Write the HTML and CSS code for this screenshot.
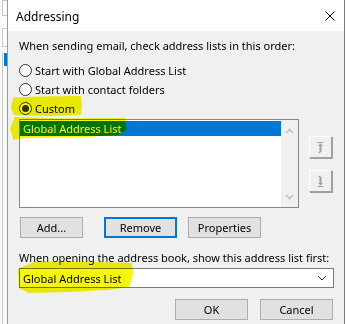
FILE: index.html
```html
<!DOCTYPE html>
<html lang="en">
<head>
  <meta charset="UTF-8">
  <title>Addressing</title>
  <link rel="stylesheet" href="styles.css">
</head>
<body>
  <div class="screen">
    <div class="backdrop">
      <span class="bd-box"></span>
      <span class="bd-box second"></span>
      <span class="bd-rail"><span class="bd-tab"></span></span>
    </div>

    <div class="dialog">
      <div class="titlebar">
        <span class="title">Addressing</span>
        <svg class="close" width="10" height="10" viewBox="0 0 10 10">
          <path d="M0.5 0.5 L9.5 9.5 M9.5 0.5 L0.5 9.5" stroke="#000" stroke-width="1" fill="none"/>
        </svg>
      </div>

      <div class="content">
        <p class="label">When sending email, check address lists in this order:</p>

        <div class="radios">
          <div class="radio"><span class="circle"></span>Start with Global Address List</div>
          <div class="radio"><span class="circle"></span>Start with contact folders</div>
          <div class="radio checked"><span class="circle"></span>Custom</div>
        </div>

        <div class="list-row">
          <div class="listbox">
            <div class="items">
              <div class="item selected">Global Address List</div>
            </div>
            <div class="scrollbar">
              <svg width="9" height="6" viewBox="0 0 9 6"><path d="M1 5 L4.5 1.5 L8 5" stroke="#c2c2c2" stroke-width="1.6" fill="none"/></svg>
              <svg width="9" height="6" viewBox="0 0 9 6"><path d="M1 1 L4.5 4.5 L8 1" stroke="#c2c2c2" stroke-width="1.6" fill="none"/></svg>
            </div>
          </div>
          <div class="movers">
            <button class="mover">
              <svg width="7" height="11" viewBox="0 0 7 11">
                <path d="M0.5 0.5 H6.5" stroke="#a0a0a0" stroke-width="1" fill="none"/>
                <path d="M3.5 1.5 L1 4 H6 Z" fill="#a0a0a0"/>
                <path d="M3.5 3 V10" stroke="#a0a0a0" stroke-width="2" fill="none"/>
                <path d="M1.5 10.5 H3.5" stroke="#a0a0a0" stroke-width="1" fill="none"/>
              </svg>
            </button>
            <button class="mover">
              <svg width="7" height="11" viewBox="0 0 7 11">
                <path d="M0.5 10.5 H6.5" stroke="#a0a0a0" stroke-width="1" fill="none"/>
                <path d="M3.5 9.5 L1 7 H6 Z" fill="#a0a0a0"/>
                <path d="M3.5 1 V8" stroke="#a0a0a0" stroke-width="2" fill="none"/>
                <path d="M1.5 0.5 H3.5" stroke="#a0a0a0" stroke-width="1" fill="none"/>
              </svg>
            </button>
          </div>
        </div>

        <div class="actions">
          <button class="btn add">Add...</button>
          <button class="btn remove">Remove</button>
          <button class="btn props">Properties</button>
        </div>

        <p class="label second">When opening the address book, show this address list first:</p>

        <div class="combo">
          <span>Global Address List</span>
          <svg width="10" height="6" viewBox="0 0 10 6"><path d="M1 1 L5 5 L9 1" stroke="#333" stroke-width="1" fill="none"/></svg>
        </div>

        <div class="footer">
          <button class="btn ok">OK</button>
          <button class="btn cancel">Cancel</button>
        </div>
      </div>

      <!-- marker highlights drawn over the screenshot -->
      <span class="marker m-custom"></span>
      <span class="marker m-list"></span>
      <span class="marker m-combo"></span>
    </div>
  </div>
</body>
</html>
```

FILE: styles.css
```css
body {
  margin: 0;
  background: #fff;
  font-family: "Noto Sans", "Open Sans", sans-serif;
  font-size: 11px;
  color: #000;
}
.screen {
  display: flex;
  width: 346px;
  height: 324px;
  overflow: hidden;
}
.backdrop {
  width: 7px;
  display: flex;
  flex-direction: column;
  background: #fbfbfb;
}
.bd-box {
  height: 14px;
  margin-left: 2px;
  border: 1px solid #c8c8c8;
  border-right: none;
  background: #fff;
}
.bd-box.second {
  margin-top: 12px;
  height: 17px;
}
.bd-rail {
  margin-top: 5px;
  margin-left: 2px;
  flex: 1;
  border-left: 1px solid #c8c8c8;
}
.bd-tab {
  display: block;
  width: 3px;
  height: 13px;
  margin-left: 1px;
  margin-top: 1px;
  background: #0078d7;
}

.dialog {
  position: relative;
  width: 336px;
  border-left: 1px solid #9a9a9a;
  border-right: 1px solid #7a7a7a;
  background: #f0f0f0;
}
.titlebar {
  height: 31px;
  background: #fff;
  display: flex;
  align-items: center;
  justify-content: space-between;
  padding: 0 9px 0 8px;
}
.title {
  font-size: 12px;
  margin-top: 1px;
}
.close {
  margin-top: 1px;
}

.content {
  padding: 7px 10px 0 11px;
}
.label {
  margin: 0;
  height: 15px;
  line-height: 15px;
  white-space: nowrap;
}
.label.second {
  margin-top: 12px;
}

.radios {
  margin-top: 8px;
}
.radio {
  height: 19px;
  display: flex;
  align-items: center;
}
.circle {
  width: 11px;
  height: 11px;
  border: 1px solid #333;
  border-radius: 50%;
  background: #fff;
  margin-right: 3px;
  display: flex;
  align-items: center;
  justify-content: center;
}
.radio.checked .circle::after {
  content: "";
  width: 7px;
  height: 7px;
  border-radius: 50%;
  background: #333;
}

.list-row {
  margin-top: 1px;
  display: flex;
  gap: 10px;
}
.listbox {
  width: 278px;
  height: 87px;
  border: 1px solid #828790;
  background: #fff;
  display: flex;
}
.items {
  flex: 1;
  padding-top: 1px;
}
.item {
  height: 15px;
  line-height: 15px;
  padding-left: 3px;
}
.item.selected {
  background: #0078d7;
  color: #fff;
}
.scrollbar {
  width: 17px;
  background: #f0f0f0;
  display: flex;
  flex-direction: column;
  justify-content: space-between;
  align-items: center;
  padding: 8px 0 7px;
}
.movers {
  display: flex;
  flex-direction: column;
  gap: 12px;
  padding-top: 17px;
}
.mover {
  width: 23px;
  height: 22px;
  padding: 0;
  background: #f0f0f0;
  border: 1px solid;
  border-color: #fff #a0a0a0 #a0a0a0 #fff;
  box-shadow: 1px 1px 0 #a0a0a0;
  display: flex;
  align-items: center;
  justify-content: center;
}

.btn {
  font: inherit;
  color: #000;
  height: 21px;
  padding: 0;
  background: #e1e1e1;
  border: 1px solid #adadad;
}
.actions {
  margin-top: 9px;
  display: flex;
}
.add {
  margin-left: 1px;
  width: 63px;
}
.remove {
  margin-left: 21px;
  width: 73px;
  border: 2px solid #0078d7;
}
.props {
  margin-left: 11px;
  width: 73px;
}

.combo {
  margin-top: 3px;
  height: 18px;
  border: 1px solid #7a7a7a;
  background: #fff;
  display: flex;
  align-items: center;
  justify-content: space-between;
  padding: 0 6px 0 3px;
}

.footer {
  margin-top: 11px;
  display: flex;
  justify-content: flex-end;
  gap: 12px;
  padding-right: 1px;
}
.ok {
  width: 73px;
}
.cancel {
  width: 73px;
}

.marker {
  position: absolute;
  background: #f6f60a;
  mix-blend-mode: multiply;
}
.m-custom {
  left: 3px;
  top: 96px;
  width: 71px;
  height: 20px;
  clip-path: polygon(3% 8%, 40% 3%, 98% 0, 100% 40%, 99% 92%, 60% 100%, 4% 96%, 0 60%);
}
.m-list {
  left: 2px;
  top: 117px;
  width: 117px;
  height: 23px;
  clip-path: polygon(4% 0, 45% 6%, 98% 4%, 100% 55%, 92% 78%, 60% 88%, 10% 92%, 3% 100%, 0 50%);
}
.m-combo {
  left: 10px;
  top: 261px;
  width: 115px;
  height: 32px;
  clip-path: polygon(17% 0, 60% 2%, 99% 6%, 100% 40%, 97% 80%, 80% 90%, 45% 97%, 10% 100%, 1% 85%, 0 25%, 6% 15%);
}
```
